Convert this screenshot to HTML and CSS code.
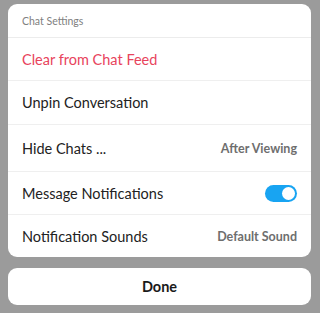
FILE: index.html
```html
<!DOCTYPE html>
<html>
<head>
<meta charset="utf-8">
<link rel="stylesheet" href="styles.css">
</head>
<body>
<div class="screen">
  <div class="sheet">
    <div class="header">Chat Settings</div>
    <div class="row r1"><span class="label danger">Clear from Chat Feed</span></div>
    <div class="row r2"><span class="label">Unpin Conversation</span></div>
    <div class="row r3"><span class="label">Hide Chats ...</span><span class="value">After Viewing</span></div>
    <div class="row r4"><span class="label">Message Notifications</span><span class="toggle"><span class="knob"></span></span></div>
    <div class="row r5"><span class="label">Notification Sounds</span><span class="value">Default Sound</span></div>
  </div>
  <div class="done">Done</div>
</div>
</body>
</html>
```
FILE: styles.css
```css
html, body { margin: 0; padding: 0; }
body {
  width: 320px; height: 313px; overflow: hidden;
  background: #9b9b9b;
  font-family: Lato, "Open Sans", sans-serif;
}
.screen {
  padding: 4px 9px 0 8px;
  display: flex; flex-direction: column;
}
.sheet {
  background: #fff;
  border-radius: 9px;
  overflow: hidden;
}
.header {
  height: 33px;
  padding-left: 14px;
  display: flex; align-items: center;
  font-size: 10.5px;
  color: #808080;
  border-bottom: 1px solid #ececec;
}
.row {
  display: flex; align-items: center; justify-content: space-between;
  padding: 0 14px;
  border-bottom: 1px solid #efefef;
}
.r1 { height: 42px; }
.r2 { height: 43px; }
.r3 { height: 46px; }
.r4 { height: 42px; }
.r5 { height: 42px; border-bottom: none; }
.label { font-size: 14.5px; color: #222; }
.danger { color: #e8435c; }
.value { font-size: 12.5px; color: #6e6e6e; font-weight: 700; }
.toggle {
  width: 32px; height: 17px;
  border-radius: 9px;
  background: #18a4f2;
  position: relative;
}
.knob {
  position: absolute; right: 2px; top: 2px;
  width: 13px; height: 13px; border-radius: 50%;
  background: #fff;
}
.done {
  margin-top: 11px;
  height: 37px;
  background: #fff;
  border-radius: 9px;
  display: flex; align-items: center; justify-content: center;
  font-size: 14.5px; font-weight: 700; color: #1a1a1a;
}
```
